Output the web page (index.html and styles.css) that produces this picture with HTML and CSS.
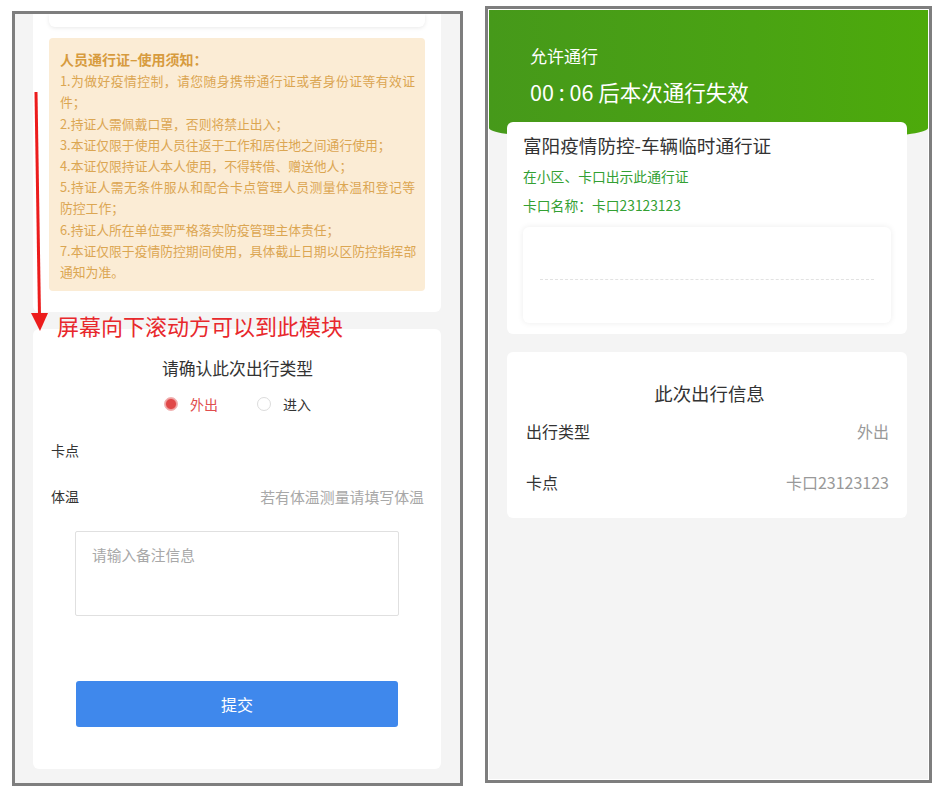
FILE: index.html
```html
<!DOCTYPE html>
<html lang="zh-CN">
<head>
<meta charset="utf-8">
<title>通行证</title>
<link rel="stylesheet" href="styles.css">
</head>
<body>
<div class="page">
  <div class="frame frame-left">
    <div class="screen screen-left">
      <div class="card card-a">
        <div class="prev-card"></div>
        <div class="notice">
          <div class="notice-title">人员通行证–使用须知：</div>
          <div class="notice-line full">1.为做好疫情控制，请您随身携带通行证或者身份证等有效证</div>
          <div class="notice-line">件；</div>
          <div class="notice-line">2.持证人需佩戴口罩，否则将禁止出入；</div>
          <div class="notice-line">3.本证仅限于使用人员往返于工作和居住地之间通行使用；</div>
          <div class="notice-line">4.本证仅限持证人本人使用，不得转借、赠送他人；</div>
          <div class="notice-line full">5.持证人需无条件服从和配合卡点管理人员测量体温和登记等</div>
          <div class="notice-line">防控工作；</div>
          <div class="notice-line">6.持证人所在单位要严格落实防疫管理主体责任；</div>
          <div class="notice-line full">7.本证仅限于疫情防控期间使用，具体截止日期以区防控指挥部</div>
          <div class="notice-line">通知为准。</div>
        </div>
      </div>
      <div class="card card-b">
        <div class="form-title">请确认此次出行类型</div>
        <div class="radio-row">
          <span class="radio-item checked"><span class="radio"></span>外出</span>
          <span class="radio-item"><span class="radio"></span>进入</span>
        </div>
        <div class="field"><span class="field-label">卡点</span><span class="field-value"></span></div>
        <div class="field"><span class="field-label">体温</span><span class="field-placeholder">若有体温测量请填写体温</span></div>
        <div class="remark">请输入备注信息</div>
        <div class="submit">提交</div>
      </div>
      <div class="annotation">
        <svg class="arrow" width="60" height="330" viewBox="0 0 60 330">
          <line x1="21" y1="78" x2="24.5" y2="302" stroke="#ec1c1c" stroke-width="3"/>
          <polygon points="16,299 33,299 25,317" fill="#ec1c1c"/>
        </svg>
        <div class="annotation-text">屏幕向下滚动方可以到此模块</div>
      </div>
    </div>
  </div>

  <div class="frame frame-right">
    <div class="screen screen-right">
      <div class="green-head">
        <div class="head-small">允许通行</div>
        <div class="head-big">00 : 06 后本次通行失效</div>
      </div>
      <div class="card pass-card">
        <div class="pass-title">富阳疫情防控-车辆临时通行证</div>
        <div class="pass-green">在小区、卡口出示此通行证</div>
        <div class="pass-green">卡口名称：卡口23123123</div>
        <div class="code-box"><div class="dash"></div></div>
      </div>
      <div class="card info-card">
        <div class="info-title">此次出行信息</div>
        <div class="info-row"><span class="info-label">出行类型</span><span class="info-value">外出</span></div>
        <div class="info-row"><span class="info-label">卡点</span><span class="info-value">卡口23123123</span></div>
      </div>
    </div>
  </div>
</div>
</body>
</html>
```
FILE: styles.css
```css
* { box-sizing: border-box; }
html, body { margin: 0; padding: 0; }
body {
  background: #fff;
  font-family: "Noto Sans CJK SC", "Noto Sans", sans-serif;
  color: #333;
  width: 938px;
  height: 791px;
  overflow: hidden;
}
.page {
  display: flex;
  align-items: flex-start;
  padding-left: 12px;
  gap: 22px;
}
.frame {
  border: 3px solid #7e7e7e;
  background: #fff;
}
.frame-left {
  margin-top: 11px;
  width: 451px;
  height: 775px;
}
.frame-right {
  margin-top: 6px;
  width: 447px;
  height: 777px;
  padding: 1px;
}
.screen {
  background: #f4f4f4;
  height: 100%;
  overflow: hidden;
  position: relative;
}

/* left screen */
.screen-left {
  padding: 0 19px 0 18px;
}
.card {
  background: #fff;
  border-radius: 6px;
}
.card-a {
  border-radius: 0 0 6px 6px;
  padding: 0 16px 21px;
}
.prev-card {
  height: 13px;
  background: #fff;
  border-radius: 0 0 6px 6px;
  box-shadow: 0 1px 4px rgba(0,0,0,0.09);
}
.notice {
  margin-top: 11px;
  background: #fbecd5;
  border-radius: 4px;
  padding: 11px 10px 9px 11px;
  color: #dba652;
  font-size: 12.8px;
  line-height: 21.2px;
}
.notice-title {
  font-size: 14px;
  font-weight: 600;
  color: #d79b3e;
}
.notice-line { white-space: nowrap; }
.notice-line.full {
  text-align: justify;
  text-align-last: justify;
}

.card-b {
  margin-top: 17px;
  height: 440px;
  padding: 27px 17px 0 18px;
  display: flex;
  flex-direction: column;
}
.form-title {
  text-align: center;
  font-size: 16.8px;
  line-height: 24px;
  color: #333;
}
.radio-row {
  margin-top: 14px;
  height: 20px;
  display: flex;
  justify-content: center;
  gap: 39px;
  font-size: 14px;
  line-height: 20px;
  color: #333;
}
.radio-item { display: flex; align-items: center; }
.radio {
  width: 14px;
  height: 14px;
  border-radius: 50%;
  border: 1px solid #dcdcdc;
  background: #fff;
  margin-right: 12px;
}
.radio-item.checked { color: #e04e4e; }
.radio-item.checked .radio {
  background: radial-gradient(circle, #e04848 0, #e04848 4.5px, #ef9d9d 5.5px, #f3b8b8 7px);
  border: 1px solid #f0b0b0;
}
.field {
  height: 46px;
  display: flex;
  align-items: center;
  justify-content: space-between;
  font-size: 14px;
}
.radio-row + .field { margin-top: 13px; }
.field-label { color: #333; }
.field-placeholder { color: #a8a8a8; font-size: 14.9px; }
.remark {
  margin: 12px 0 0 24px;
  width: 324px;
  height: 85px;
  border: 1px solid #e0e0e0;
  border-radius: 2px;
  padding: 12px 16px;
  font-size: 14.7px;
  line-height: 22px;
  color: #a8a8a8;
}
.submit {
  margin: 65px 0 0 25px;
  width: 322px;
  height: 46px;
  background: #3f88ec;
  border-radius: 3px;
  color: #fff;
  font-size: 16px;
  display: flex;
  align-items: center;
  justify-content: center;
}
.annotation {
  position: absolute;
  left: 0;
  top: 0;
  width: 100%;
  height: 100%;
  pointer-events: none;
}
.arrow {
  position: absolute;
  left: 0;
  top: 0;
}
.annotation-text {
  position: absolute;
  left: 42px;
  top: 298px;
  font-size: 22px;
  line-height: 26px;
  color: #e8282c;
  white-space: nowrap;
}

/* right screen */
.green-head {
  height: 133px;
  background: linear-gradient(90deg, #46991a 0%, #4aa313 60%, #4daa0b 100%);
  border-radius: 0 0 50% 50% / 0 0 15px 15px;
  padding: 33px 0 0 41px;
  color: #fff;
}
.head-small {
  font-size: 17px;
  line-height: 26px;
}
.head-big {
  margin-top: 7px;
  font-size: 21.5px;
  line-height: 32px;
}
.pass-card {
  margin: -21px 0 0 18px;
  width: 400px;
  height: 212px;
  position: relative;
  padding: 10px 16px 0 16px;
}
.pass-title {
  font-size: 18.6px;
  line-height: 26px;
  color: #333;
}
.pass-green {
  font-size: 13.8px;
  line-height: 29px;
  color: #33a033;
}
.pass-title + .pass-green { margin-top: 4px; }
.code-box {
  margin-top: 7px;
  height: 96px;
  border-radius: 6px;
  background: #fff;
  box-shadow: 0 0 6px rgba(0,0,0,0.08);
  padding: 52px 17px 0;
}
.dash {
  border-top: 1px dashed #e2e2e2;
}
.info-card {
  margin: 18px 0 0 18px;
  width: 400px;
  height: 166px;
  padding: 28px 18px 0 19px;
}
.info-title {
  text-align: center;
  font-size: 18.4px;
  line-height: 26px;
  color: #333;
  padding-left: 4px;
}
.info-row {
  height: 51px;
  display: flex;
  align-items: center;
  justify-content: space-between;
  font-size: 16px;
}
.info-title + .info-row { margin-top: -1px; }
.info-label { color: #333; }
.info-value { color: #999; }
```
